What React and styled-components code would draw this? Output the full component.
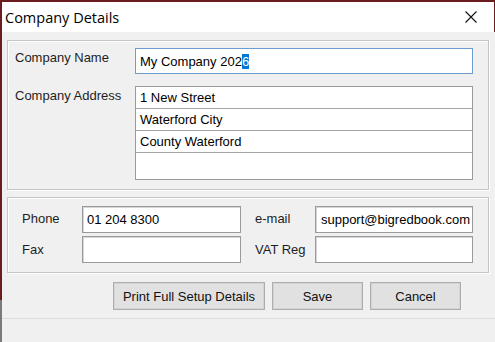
import styled, { createGlobalStyle } from "styled-components";

const Global = createGlobalStyle`
  html, body {
    margin: 0;
    padding: 0;
    width: 495px;
    height: 342px;
    overflow: hidden;
  }
  body {
    font-family: "Liberation Sans", Arial, sans-serif;
  }
`;

const Desktop = styled.div`
  width: 495px;
  height: 342px;
  box-sizing: border-box;
  padding: 2px 0 0 2px;
  background: linear-gradient(to bottom, #6a1c1e 300px, #7a7a7a 300px);
  display: flex;
  flex-direction: column;
`;

const TitleBar = styled.div`
  height: 30px;
  margin-right: 1px;
  background: #fff;
  display: flex;
  align-items: center;
  justify-content: space-between;
  padding: 0 17px 0 3px;
  font-family: "Open Sans", "Noto Sans", sans-serif;
  font-size: 14.5px;
  color: #000;
`;

const Client = styled.div`
  flex: 1;
  background: #f0f0f0;
  display: flex;
  flex-direction: column;
`;

const GroupBox = styled.div`
  margin: ${(p) => p.$top}px 6px 0 5px;
  border: 1px solid #c6c6c6;
  box-shadow: inset 1px 1px 0 #fff, 1px 1px 0 #fff;
  padding: ${(p) => p.$pad};
  display: grid;
  grid-template-columns: ${(p) => p.$cols};
  row-gap: ${(p) => p.$rowGap}px;
  align-items: start;
`;

const Label = styled.div`
  font-size: 13px;
  line-height: 15px;
  color: #1e1e1e;
  white-space: nowrap;
  padding-top: ${(p) => p.$top ?? 2}px;
  padding-left: ${(p) => p.$indent ?? 0}px;
`;

const TextBox = styled.div`
  box-sizing: border-box;
  height: ${(p) => p.$h}px;
  background: #fff;
  border: 1px solid ${(p) => (p.$focus ? "#6d9cd0" : "#9a9a9a")};
  box-shadow: ${(p) => (p.$focus ? "none" : "inset 1px 1px 0 #d6d6d6")};
  padding: ${(p) => (p.$right ? "0 2px 0 0" : "0 4px")};
  display: flex;
  align-items: center;
  font-size: 13px;
  color: #000;
  white-space: nowrap;
  overflow: hidden;
  justify-content: ${(p) => (p.$right ? "flex-end" : "flex-start")};
`;

const Selected = styled.span`
  background: #0078d7;
  color: #fff;
`;

const AddressGrid = styled.div`
  box-sizing: border-box;
  height: 94px;
  background: #fff;
  border: 1px solid #9a9a9a;
  display: grid;
  grid-template-rows: 22px 22px 22px 1fr;
`;

const AddressLine = styled.div`
  border-bottom: ${(p) => (p.$last ? "none" : "1px solid #a6a6a6")};
  padding: 0 4px;
  display: flex;
  align-items: center;
  font-size: 13px;
  color: #000;
`;

const ButtonRow = styled.div`
  display: flex;
  justify-content: flex-end;
  gap: 7px;
  padding: 9px 34px 0 0;
`;

const Button = styled.div`
  box-sizing: border-box;
  width: ${(p) => p.$w}px;
  height: 28px;
  background: #e1e1e1;
  border: 1px solid #adadad;
  box-shadow: inset 0 0 0 1px #d4d4d4;
  display: flex;
  align-items: center;
  justify-content: center;
  font-size: 13px;
  color: #111;
`;

const StatusBar = styled.div`
  flex: 1;
  margin-top: 8px;
  border-top: 1px solid #dcdcdc;
  background: #f0f0f0;
`;

const CloseIcon = () => (
  <svg width="12" height="12" viewBox="0 0 12 12">
    <path d="M0.5 0.5 L11.5 11.5 M11.5 0.5 L0.5 11.5" stroke="#111" strokeWidth="1.1" fill="none" />
  </svg>
);

export default function App() {
  return (
    <>
      <Global />
      <Desktop>
        <TitleBar>
          <span>Company Details</span>
          <CloseIcon />
        </TitleBar>
        <Client>
          <GroupBox $top={8} $pad="7px 14px 9px 7px" $cols="120px 338px" $rowGap={12}>
            <Label>Company Name</Label>
            <TextBox $h={26} $focus>
              My Company 202<Selected>6</Selected>
            </TextBox>
            <Label>Company Address</Label>
            <AddressGrid>
              <AddressLine>1 New Street</AddressLine>
              <AddressLine>Waterford City</AddressLine>
              <AddressLine>County Waterford</AddressLine>
              <AddressLine $last />
            </AddressGrid>
          </GroupBox>
          <GroupBox $top={7} $pad="8px 15px 9px 14px" $cols="60px 159px 74px 158px" $rowGap={3}>
            <Label $top={5}>Phone</Label>
            <TextBox $h={27}>01 204 8300</TextBox>
            <Label $top={5} $indent={14}>e-mail</Label>
            <TextBox $h={27} $right>support@bigredbook.com</TextBox>
            <Label $top={6}>Fax</Label>
            <TextBox $h={27} />
            <Label $top={6} $indent={14}>VAT Reg</Label>
            <TextBox $h={27} />
          </GroupBox>
          <ButtonRow>
            <Button $w={152}>Print Full Setup Details</Button>
            <Button $w={91}>Save</Button>
            <Button $w={91}>Cancel</Button>
          </ButtonRow>
          <StatusBar />
        </Client>
      </Desktop>
    </>
  );
}
